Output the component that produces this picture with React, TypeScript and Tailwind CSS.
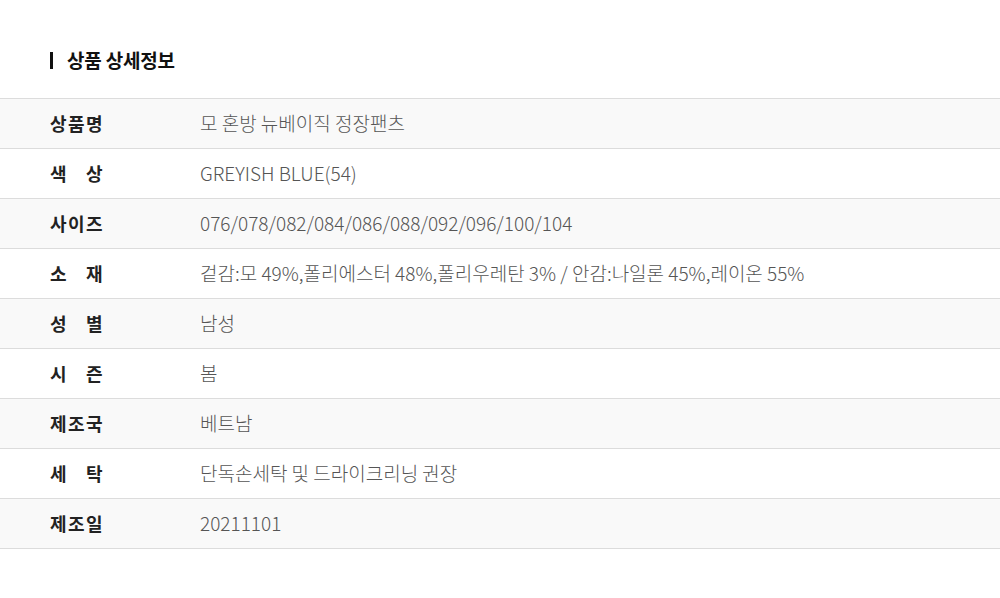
const rows: { label: string; value: string }[] = [
  { label: '상품명', value: '모 혼방 뉴베이직 정장팬츠' },
  { label: '색상', value: 'GREYISH BLUE(54)' },
  { label: '사이즈', value: '076/078/082/084/086/088/092/096/100/104' },
  { label: '소재', value: '겉감:모 49%,폴리에스터 48%,폴리우레탄 3% / 안감:나일론 45%,레이온 55%' },
  { label: '성별', value: '남성' },
  { label: '시즌', value: '봄' },
  { label: '제조국', value: '베트남' },
  { label: '세탁', value: '단독손세탁 및 드라이크리닝 권장' },
  { label: '제조일', value: '20211101' },
];

function Label({ text }: { text: string }) {
  return (
    <div className="flex w-[52px] justify-between">
      {text.split('').map((ch, i) => (
        <span key={i}>{ch}</span>
      ))}
    </div>
  );
}

export default function App() {
  return (
    <div
      className="min-h-[598px] w-[1000px] bg-white pt-[48px]"
      style={{ fontFamily: '"Noto Sans CJK KR", "Noto Sans", sans-serif' }}
    >
      <div className="flex items-center pl-[50px]">
        <span className="h-[17px] w-[3px] bg-[#111]" />
        <h2 className="ml-[14px] text-[19px] font-bold leading-[24px] tracking-[-0.2px] text-[#111]">
          상품 상세정보
        </h2>
      </div>

      <div className="mt-[26px] border-t border-[#dcdcdc]">
        {rows.map((row, i) => (
          <div
            key={row.label}
            className={`flex h-[50px] items-center border-b border-[#dcdcdc] ${
              i % 2 === 0 ? 'bg-[#f9f9f9]' : 'bg-white'
            }`}
          >
            <div className="w-[200px] shrink-0 pl-[50px] text-[18px] font-bold tracking-[-0.5px] text-[#222]">
              <Label text={row.label} />
            </div>
            <div className="text-[19px] font-light text-[#555]">{row.value}</div>
          </div>
        ))}
      </div>
    </div>
  );
}
